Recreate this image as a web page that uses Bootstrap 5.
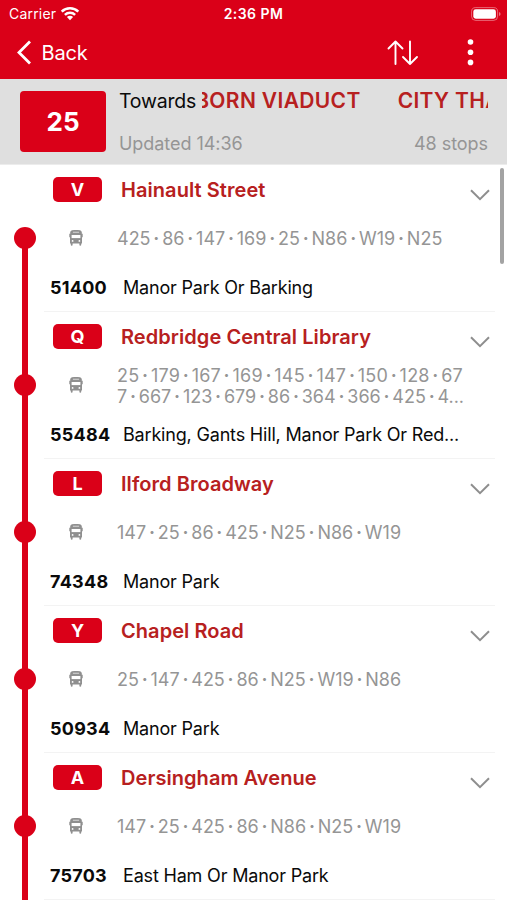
<!DOCTYPE html>
<html lang="en">
<head>
<meta charset="utf-8">
<meta name="viewport" content="width=device-width, initial-scale=1">
<title>Route 25</title>
<link href="https://cdn.jsdelivr.net/npm/bootstrap@5.3.0/dist/css/bootstrap.min.css" rel="stylesheet">
<style>
:root{--bus-red:#da0018;--ink-red:#b72020;--muted:#959595}
body{font-family:Inter,"Liberation Sans",sans-serif;color:#0a0a0a;height:900px;overflow:hidden;background:#fff}
svg{display:block;flex:none}
.top-area{background:var(--bus-red);height:79px}
.status-bar{height:27px;font-size:14px;line-height:27px}
.status-bar .clock{font-weight:600;letter-spacing:.45px}
.carrier{margin-left:9px;letter-spacing:.2px}
.battery{margin-right:6px}
.nav-bar{height:52px;font-size:20px}
.back-label{margin-left:9.5px;letter-spacing:-.2px}
.three-dots{margin-left:47px;margin-right:33px}
.route-head{background:#dfdfdf;height:85.5px;border-bottom:1px solid #ececec}
.route-no{width:86px;height:61px;margin:12px 0 0 20px;background:var(--bus-red);font-size:26px;border-radius:4px}
.head-text{width:369px;margin:9px 0 0 13px}
.towards{font-size:19.5px;height:26px;line-height:26px;letter-spacing:-.2px}
.ticker{color:var(--ink-red);font-size:21px;font-weight:600;margin-left:6px;letter-spacing:.35px}
.ticker-run{margin-left:-7px}
.ticker-next{margin-left:37px}
.head-sub{font-size:18px;color:var(--muted);line-height:24px;margin-top:18px;letter-spacing:-.05px}
.stop{height:147px}
.rail{width:51px}
.rail::before{content:"";width:6px;background:var(--bus-red);position:absolute;top:0;bottom:0;left:22px}
.stop:first-child .rail::before{top:73px}
.dot{width:22px;height:22px;background:var(--bus-red);margin-right:1px}
.detail{width:451px;margin-left:-7px;border-bottom:1px solid #f3f3f3}
.line-row{height:49px}
.stop-tag{width:49px;height:25px;background:var(--bus-red);border-radius:5px;font-size:18px;margin-left:9px}
.stop-title{color:var(--ink-red);font-size:20px;font-weight:600;margin-left:19px;letter-spacing:.06px;padding-top:1px}
.chev{margin-right:5px;margin-top:12px}
.bus{margin-left:24.5px}
.routes{color:var(--muted);font-size:18px;line-height:21px;margin-left:34.5px;white-space:pre;padding-top:1px}
.routes i{font-style:normal;display:inline-block;width:11.6px;text-align:center;font-weight:700}
.routes .full-line{letter-spacing:.2px}
.code{width:73px;padding-left:6px;font-size:18px;font-weight:700;letter-spacing:.25px}
.dest{font-size:18px;margin-left:6px;letter-spacing:-.18px}
.thumb{top:168px;left:500px;width:3.5px;height:96px;background:#a3a3a3}
</style>
<script src="https://cdn.jsdelivr.net/npm/bootstrap@5.3.0/dist/js/bootstrap.bundle.min.js"></script>
</head>
<body>
<header class="top-area text-white">
  <div class="status-bar d-flex align-items-center position-relative">
    <span class="carrier">Carrier</span>
    <svg class="ms-1" width="20" height="15" viewBox="0 0 20 15" fill="none" stroke="#fff" stroke-width="2.5"><path d="M1.7 5.6a11.8 11.8 0 0 1 16.6 0M4.9 8.9a7.3 7.3 0 0 1 10.2 0"/><path d="M10 14.2 6.9 11a4.4 4.4 0 0 1 6.2 0z" fill="#fff" stroke="none"/></svg>
    <span class="clock position-absolute start-50 translate-middle-x text-nowrap">2:36 PM</span>
    <svg class="battery ms-auto" width="30" height="14" viewBox="0 0 30 14"><rect x=".6" y=".6" width="26" height="12.8" rx="4" fill="none" stroke="#fff" stroke-opacity=".4"/><rect x="2.3" y="2.3" width="22.6" height="9.4" rx="2.4" fill="#fff"/><path d="M28 5v4q1.6-.6 1.6-2T28 5" fill="#fff" opacity=".45"/></svg>
  </div>
  <nav class="nav-bar d-flex align-items-center">
    <svg width="32" height="26" viewBox="0 0 32 26" fill="none" stroke="#fff" stroke-width="2.8"><path d="M30 1.5 19 12.500l11 11"/></svg>
    <span class="back-label">Back</span>
    <svg class="ms-auto" width="32" height="26" viewBox="0 0 32 26" fill="none" stroke="#fff" stroke-width="1.9" stroke-linecap="round" stroke-linejoin="round"><path d="M8.500 24V1.500M1.500 8.500l7-7 7 7M23 1.500V24M16 17l7 7 7-7"/></svg>
    <svg class="three-dots" width="8" height="28" viewBox="0 0 8 28" fill="#fff"><circle cx="4.500" cy="3" r="2.800"/><circle cx="4.500" cy="13.200" r="2.800"/><circle cx="4.500" cy="23.400" r="2.800"/></svg>
  </nav>
</header>
<section class="route-head d-flex">
  <div class="route-no text-white fw-bold d-flex align-items-center justify-content-center">25</div>
  <div class="head-text">
    <div class="towards d-flex"><span class="towards-label">Towards</span><div class="ticker overflow-hidden text-nowrap flex-fill d-flex"><span class="ticker-run">BORN VIADUCT</span><span class="ticker-next">CITY THAMESLINK</span></div></div>
    <div class="head-sub d-flex justify-content-between"><span>Updated 14:36</span><span>48 stops</span></div>
  </div>
</section>
<main id="stops"></main>
<div class="thumb position-absolute rounded-pill"></div>
<script>
const stops = [
  ["V","Hainault Street",["425·86·147·169·25·N86·W19·N25"],"51400","Manor Park Or Barking"],
  ["Q","Redbridge Central Library",["25·179·167·169·145·147·150·128·67","7·667·123·679·86·364·366·425·4..."],"55484","Barking, Gants Hill, Manor Park Or Red..."],
  ["L","Ilford Broadway",["147·25·86·425·N25·N86·W19"],"74348","Manor Park"],
  ["Y","Chapel Road",["25·147·425·86·N25·W19·N86"],"50934","Manor Park"],
  ["A","Dersingham Avenue",["147·25·425·86·N86·N25·W19"],"75703","East Ham Or Manor Park"]
];
document.getElementById("stops").innerHTML = stops.map(([tag,name,routes,code,dest]) => `
<article class="stop d-flex">
  <div class="rail position-relative d-flex align-items-center justify-content-center"><span class="dot rounded-circle position-relative"></span></div>
  <div class="detail">
    <div class="line-row d-flex align-items-center">
      <span class="stop-tag text-white fw-bold d-flex align-items-center justify-content-center">${tag}</span>
      <span class="stop-title">${name}</span>
      <svg class="chev ms-auto" width="20" height="12" viewBox="0 0 20 12" fill="none" stroke="#8e8e8e" stroke-width="2"><path d="m1 1.300 9 8.800 9-8.800"/></svg>
    </div>
    <div class="line-row d-flex align-items-center">
      <svg class="bus" width="14" height="16" viewBox="0 0 14 16"><path fill="#8f8f8f" d="M3 .2Q7-.3 11 .2q1.600.3 1.800 2v1.600h.9v3.400h-.7v6.400h-.8v1.500q0 .7-.9.7t-.9-.7v-1.500H3.600v1.500q0 .7-.9.700t-.9-.7v-1.500H1V7.200H.3V3.800h.9V2.200Q1.400.5 3 .2z"/><path fill="#e8e8e8" d="M3.900 1.800h6.200v.8H3.900z"/><path fill="#fff" d="M2.600 5h8.800v3.100H2.600z"/><circle cx="3.600" cy="10.900" r=".9" fill="#fff"/><circle cx="10.400" cy="10.900" r=".9" fill="#fff"/></svg>
      <div class="routes">${routes.map((r,n) => `<div class="${n < routes.length - 1 ? "full-line" : "last-line"}">${r.replace(/·/g,"<i>·</i>")}</div>`).join("")}</div>
    </div>
    <div class="line-row d-flex align-items-center"><span class="code">${code}</span><span class="dest">${dest}</span></div>
  </div>
</article>`).join("");
</script>
</body>
</html>
